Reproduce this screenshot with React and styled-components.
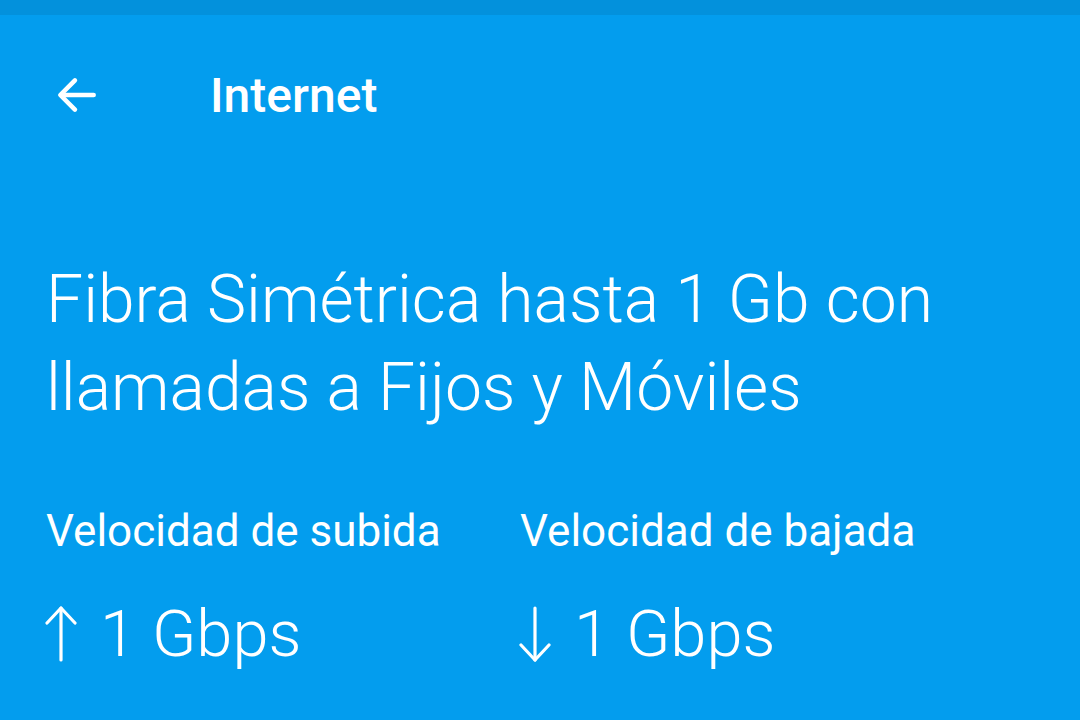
import styled, { createGlobalStyle } from "styled-components";

const GlobalStyle = createGlobalStyle`
  html, body {
    margin: 0;
    padding: 0;
    background: #039dee;
  }
  body {
    font-family: Roboto, "Noto Sans", sans-serif;
  }
`;

const Screen = styled.div`
  width: 1080px;
  height: 720px;
  background: #039dee;
  color: #ffffff;
  overflow: hidden;
`;

const StatusStrip = styled.div`
  height: 15px;
  background: #0391dc;
`;

const Toolbar = styled.div`
  display: flex;
  align-items: center;
  height: 160px;
  padding-left: 52px;
  gap: 108px;
`;

const BackButton = styled.div`
  width: 50px;
  height: 50px;
  display: flex;
  align-items: center;
  justify-content: center;
`;

const Title = styled.h1`
  margin: 0;
  font-size: 48px;
  font-weight: 500;
`;

const Content = styled.div`
  padding: 81px 46px 0;
`;

const Headline = styled.h2`
  margin: 0;
  font-size: 66px;
  font-weight: 300;
  line-height: 88px;
`;

const Speeds = styled.div`
  display: grid;
  grid-template-columns: 474px 1fr;
  margin-top: 74px;
`;

const Speed = styled.div`
  display: flex;
  flex-direction: column;
`;

const Label = styled.div`
  font-size: 44px;
  font-weight: 400;
  line-height: 50px;
`;

const Value = styled.div`
  margin-top: 43px;
  font-size: 65px;
  font-weight: 300;
  line-height: 70px;
  display: flex;
  align-items: center;
  gap: 23px;
`;

const ArrowIcon = styled.svg`
  margin-left: -1px;
  flex: none;
`;

function BackArrow() {
  return (
    <svg width="50" height="50" viewBox="0 0 24 24" fill="none" stroke="#fff" strokeWidth="2.2" strokeLinecap="round" strokeLinejoin="round">
      <path d="M20 12H4.5" />
      <path d="M11 5l-7 7 7 7" />
    </svg>
  );
}

function Arrow({ down }) {
  return (
    <ArrowIcon width="32" height="56" viewBox="0 0 16 28" fill="none" stroke="#fff" strokeWidth="1.6" strokeLinecap="round" strokeLinejoin="round">
      {down ? (
        <>
          <path d="M8 1v26" />
          <path d="M1 19.5l7 7.5 7-7.5" />
        </>
      ) : (
        <>
          <path d="M8 27V1" />
          <path d="M1 8.5L8 1l7 7.5" />
        </>
      )}
    </ArrowIcon>
  );
}

export default function App() {
  return (
    <Screen>
      <GlobalStyle />
      <StatusStrip />
      <Toolbar>
        <BackButton>
          <BackArrow />
        </BackButton>
        <Title>Internet</Title>
      </Toolbar>
      <Content>
        <Headline>
          Fibra Simétrica hasta 1 Gb con
          <br />
          llamadas a Fijos y Móviles
        </Headline>
        <Speeds>
          <Speed>
            <Label>Velocidad de subida</Label>
            <Value>
              <Arrow />1 Gbps
            </Value>
          </Speed>
          <Speed>
            <Label>Velocidad de bajada</Label>
            <Value>
              <Arrow down />1 Gbps
            </Value>
          </Speed>
        </Speeds>
      </Content>
    </Screen>
  );
}
